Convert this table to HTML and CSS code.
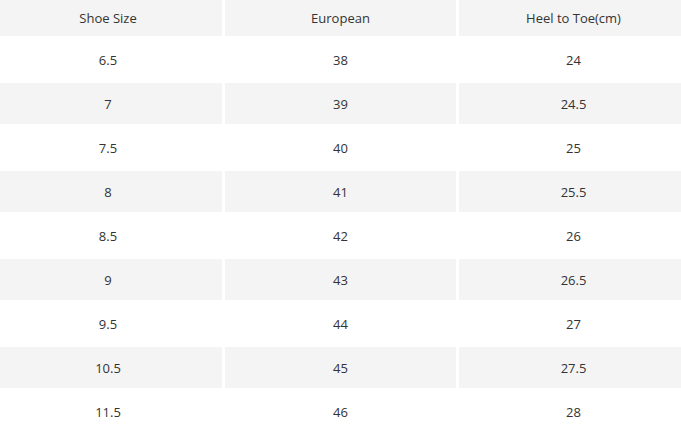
FILE: index.html
```html
<!DOCTYPE html>
<html>
<head>
<meta charset="utf-8">
<link rel="stylesheet" href="styles.css">
</head>
<body>
<table class="size-table">
  <colgroup>
    <col class="c1"><col class="c2"><col class="c3">
  </colgroup>
  <thead>
    <tr class="head"><th>Shoe Size</th><th>European</th><th>Heel to Toe(cm)</th></tr>
  </thead>
  <tbody>
    <tr><td>6.5</td><td>38</td><td>24</td></tr>
    <tr class="alt"><td>7</td><td>39</td><td>24.5</td></tr>
    <tr><td>7.5</td><td>40</td><td>25</td></tr>
    <tr class="alt"><td>8</td><td>41</td><td>25.5</td></tr>
    <tr><td>8.5</td><td>42</td><td>26</td></tr>
    <tr class="alt"><td>9</td><td>43</td><td>26.5</td></tr>
    <tr><td>9.5</td><td>44</td><td>27</td></tr>
    <tr class="alt"><td>10.5</td><td>45</td><td>27.5</td></tr>
    <tr><td>11.5</td><td>46</td><td>28</td></tr>
  </tbody>
</table>
</body>
</html>
```
FILE: styles.css
```css
html, body {
  margin: 0;
  padding: 0;
  background: #ffffff;
  overflow: hidden;
}
.size-table {
  table-layout: fixed;
  width: 700px;
  margin: -3px 0 0 -9px;
  border-collapse: separate;
  border-spacing: 3px;
  font-family: "Open Sans", "Noto Sans", sans-serif;
  font-size: 13px;
  color: #333333;
}
.c1 { width: 228px; }
.c2 { width: 231px; }
.c3 { width: 229px; }
.size-table th,
.size-table td {
  padding: 0;
  text-align: center;
  font-weight: normal;
  vertical-align: middle;
}
.head th {
  height: 36px;
  background: #f4f4f4;
}
.size-table td {
  height: 41px;
}
.alt td {
  background: #f4f4f4;
}
```
